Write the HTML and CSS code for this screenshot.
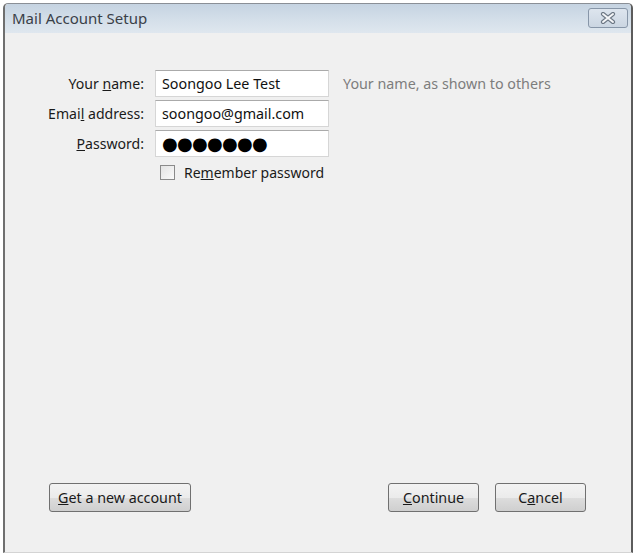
FILE: index.html
```html
<!DOCTYPE html>
<html>
<head>
<meta charset="utf-8">
<link rel="stylesheet" href="styles.css">
</head>
<body>
<div class="window">
  <div class="titlebar">
    <span class="title">Mail Account Setup</span>
    <div class="close">
      <svg width="16" height="12" viewBox="0 0 16 12"><path d="M3 2 L13 10 M13 2 L3 10" stroke="#6d7885" stroke-width="4.2" stroke-linecap="round"/><path d="M3 2 L13 10 M13 2 L3 10" stroke="#f4f6f8" stroke-width="2" stroke-linecap="round"/></svg>
    </div>
  </div>
  <div class="content">
    <div class="form">
      <label class="lbl">Your <u>n</u>ame:</label>
      <div class="field">Soongoo Lee Test</div>
      <span class="hint">Your name, as shown to others</span>

      <label class="lbl">Emai<u>l</u> address:</label>
      <div class="field">soongoo@gmail.com</div>
      <span></span>

      <label class="lbl"><u>P</u>assword:</label>
      <div class="field pw">●●●●●●●</div>
      <span></span>

      <span></span>
      <div class="check"><span class="box"></span><span>Re<u>m</u>ember password</span></div>
      <span></span>
    </div>
    <div class="footer">
      <button class="btn wide"><u>G</u>et a new account</button>
      <div class="right">
        <button class="btn"><u>C</u>ontinue</button>
        <button class="btn">C<u>a</u>ncel</button>
      </div>
    </div>
  </div>
</div>
</body>
</html>
```
FILE: styles.css
```css
html, body {
  margin: 0;
  padding: 0;
  background: #ffffff;
}
body {
  font-family: "Noto Sans", "Open Sans", sans-serif;
  font-size: 14px;
  color: #1a1a1a;
  padding: 3px 0 0 3px;
}
.window {
  width: 626px;
  height: 548px;
  border-left: 2px solid #6f6f6f;
  border-right: 2px solid #5c5c5c;
  border-bottom: 1px solid #d4d4d4;
  border-top: 1px solid #8a8f96;
  border-top-left-radius: 5px;
  border-top-right-radius: 5px;
  background: #f0f0f0;
  display: flex;
  flex-direction: column;
}
.titlebar {
  height: 29px;
  background: linear-gradient(#c5d3e1, #d4dfe9 55%, #dfe7ef);
  display: flex;
  align-items: center;
  justify-content: space-between;
  padding: 0 3px 0 7px;
  border-top-left-radius: 4px;
  border-top-right-radius: 4px;
}
.title {
  font-size: 15px;
  color: #3a4048;
  margin-top: -2px;
}
.close {
  width: 38px;
  height: 18px;
  border: 1px solid #8796a8;
  border-radius: 3px;
  background: linear-gradient(#dde5ee, #cbd6e2);
  display: flex;
  align-items: center;
  justify-content: center;
  margin-top: -1px;
}
.content {
  flex: 1;
  display: flex;
  flex-direction: column;
}
.form {
  display: grid;
  grid-template-columns: 139px 174px auto;
  column-gap: 11px;
  row-gap: 3px;
  padding-top: 37px;
  align-items: center;
  flex: 1;
  align-content: start;
}
.lbl {
  text-align: right;
  color: #1a1a1a;
  font-size: 14.1px;
}
.field {
  height: 25px;
  background: #ffffff;
  border: 1px solid #d6d6d6;
  border-top-color: #aaaaaa;
  box-sizing: content-box;
  padding: 0 6px;
  width: 160px;
  line-height: 25px;
  color: #111;
  font-size: 14.3px;
  overflow: hidden;
  white-space: nowrap;
}
.pw {
  font-family: "DejaVu Sans", sans-serif;
  font-size: 18px;
  letter-spacing: -0.7px;
  line-height: 25px;
  color: #000;
}
.hint {
  color: #7d7d7d;
  margin-left: 3px;
  font-size: 14.3px;
}
.check {
  display: flex;
  align-items: center;
  height: 24px;
  padding-left: 5px;
  gap: 9px;
  font-size: 14px;
}
.box {
  width: 13px;
  height: 13px;
  border: 1px solid #8a8a8a;
  background: linear-gradient(135deg, #e3e3e3, #fafafa);
}
.footer {
  display: flex;
  justify-content: space-between;
  align-items: center;
  padding: 0 45px 40px 44px;
}
.right {
  display: flex;
  gap: 16px;
}
.btn {
  font-family: "Noto Sans", "Open Sans", sans-serif;
  font-size: 14.3px;
  color: #1a1a1a;
  height: 29px;
  width: 91px;
  border: 1px solid #707070;
  border-radius: 3px;
  background: linear-gradient(#f3f3f3, #ebebeb 50%, #dddddd 51%, #cfcfcf);
  padding: 0;
}
.btn.wide {
  width: 142px;
}
```
